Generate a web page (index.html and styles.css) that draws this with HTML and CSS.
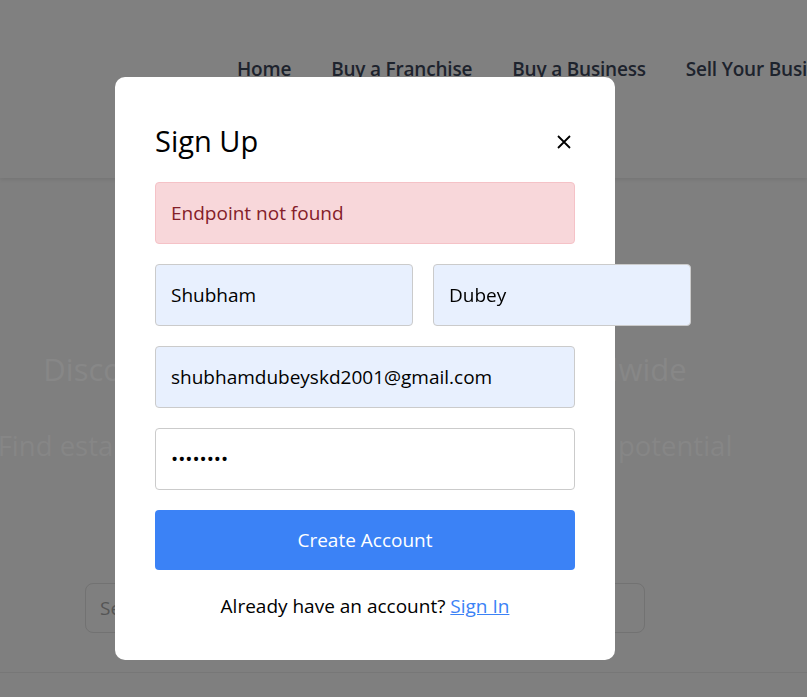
FILE: index.html
```html
<!DOCTYPE html>
<html lang="en">
<head>
<meta charset="utf-8">
<title>Sign Up</title>
<link rel="stylesheet" href="styles.css">
</head>
<body>
<div class="page">
  <header class="site-header">
    <nav class="nav">
      <a href="#" class="nav-link">Home</a>
      <a href="#" class="nav-link">Buy a Franchise</a>
      <a href="#" class="nav-link">Buy a Business</a>
      <a href="#" class="nav-link">Sell Your Business</a>
    </nav>
  </header>
  <main class="hero">
    <h1 class="hero-title">Discover Franchise Opportunities Worldwide</h1>
    <p class="hero-sub">Find established businesses and franchises with potential</p>
    <div class="search"><span class="search-ph">Search businesses</span></div>
  </main>
  <footer class="page-foot"></footer>
</div>

<div class="overlay">
  <div class="modal">
    <div class="modal-head">
      <h2 class="modal-title">Sign Up</h2>
      <button class="close" aria-label="Close">
        <svg width="14" height="14" viewBox="0 0 14 14"><path d="M1 1 L13 13 M13 1 L1 13" stroke="#000" stroke-width="1.8" fill="none"/></svg>
      </button>
    </div>
    <div class="alert">Endpoint not found</div>
    <div class="row">
      <input class="field autofill" type="text" value="Shubham">
      <input class="field autofill" type="text" value="Dubey">
    </div>
    <input class="field autofill wide" type="email" value="shubhamdubeyskd2001@gmail.com">
    <input class="field wide" type="password" value="abcdefgh">
    <button class="submit">Create Account</button>
    <p class="switch">Already have an account? <a href="#" class="link">Sign In</a></p>
  </div>
</div>
</body>
</html>
```
FILE: styles.css
```css
* { box-sizing: border-box; }
html, body { margin: 0; padding: 0; }
body {
  font-family: "Open Sans", "Noto Sans", sans-serif;
  background: #7f7f7f;
  overflow: hidden;
  height: 697px;
}
.page { width: 807px; }
.site-header {
  height: 178px;
  background: #808080;
  box-shadow: 0 2px 4px rgba(0,0,0,0.08);
  padding-top: 56px;
  padding-left: 237px;
  overflow: hidden;
}
.nav { display: flex; gap: 40px; white-space: nowrap; }
.nav-link {
  font-size: 19px;
  font-weight: 600;
  color: #1d232d;
  text-decoration: none;
  letter-spacing: -0.2px;
}
.hero {
  width: 730px;
  text-align: center;
  padding-top: 170px;
  height: 494px;
}
.hero-title {
  margin: 0 -60px;
  font-size: 31px;
  font-weight: 400;
  color: #878787;
  white-space: nowrap;
}
.hero-sub {
  margin: 37px -60px 0;
  font-size: 27.5px;
  color: #868686;
  white-space: nowrap;
}
.search {
  margin: 119px 0 0 85px;
  width: 560px;
  height: 50px;
  border: 1px solid #727272;
  border-radius: 8px;
  text-align: left;
  padding: 11px 14px;
  font-size: 19px;
  color: #555;
}
.page-foot { border-top: 1px solid #777; }

.overlay {
  position: fixed;
  top: 0; left: 0;
  width: 730px;
  height: 697px;
  display: flex;
  justify-content: center;
  align-items: flex-start;
  padding-top: 77px;
}
.modal {
  width: 500px;
  height: 583px;
  background: #fff;
  border-radius: 10px;
  padding: 40px 40px;
}
.modal-head {
  display: flex;
  justify-content: space-between;
  align-items: center;
  height: 46px;
  margin-bottom: 19px;
}
.modal-title {
  margin: 0;
  font-size: 29px;
  font-weight: 400;
  color: #000;
}
.close {
  border: 0;
  background: none;
  padding: 0;
  width: 14px;
  height: 14px;
  margin-right: 4px;
  margin-top: 4px;
  display: flex;
}
.alert {
  height: 62px;
  background: #f8d7da;
  border: 1px solid #f5c2c7;
  border-radius: 4px;
  color: #842029;
  font-size: 19px;
  padding: 0 15px;
  display: flex;
  align-items: center;
  margin-bottom: 20px;
}
.row {
  display: flex;
  gap: 20px;
  margin-bottom: 20px;
}
.field {
  display: block;
  height: 62px;
  border: 1px solid #cbcbcb;
  border-radius: 4px;
  padding: 0 15px;
  font-family: "Open Sans", "Noto Sans", sans-serif;
  font-size: 19px;
  color: #000;
  background: #fff;
  outline: none;
}
.row .field { width: 258px; flex: none; }
.wide { width: 420px; margin-bottom: 20px; }
.autofill { background: #e8f0fe; }
.submit {
  display: block;
  width: 420px;
  height: 60px;
  border: 0;
  border-radius: 4px;
  background: #3b82f6;
  color: #fff;
  font-family: "Open Sans", "Noto Sans", sans-serif;
  font-size: 19px;
}
.switch {
  margin: 23px 0 0;
  text-align: center;
  font-size: 19px;
  color: #000;
}
.link { color: #3b82f6; }
```
